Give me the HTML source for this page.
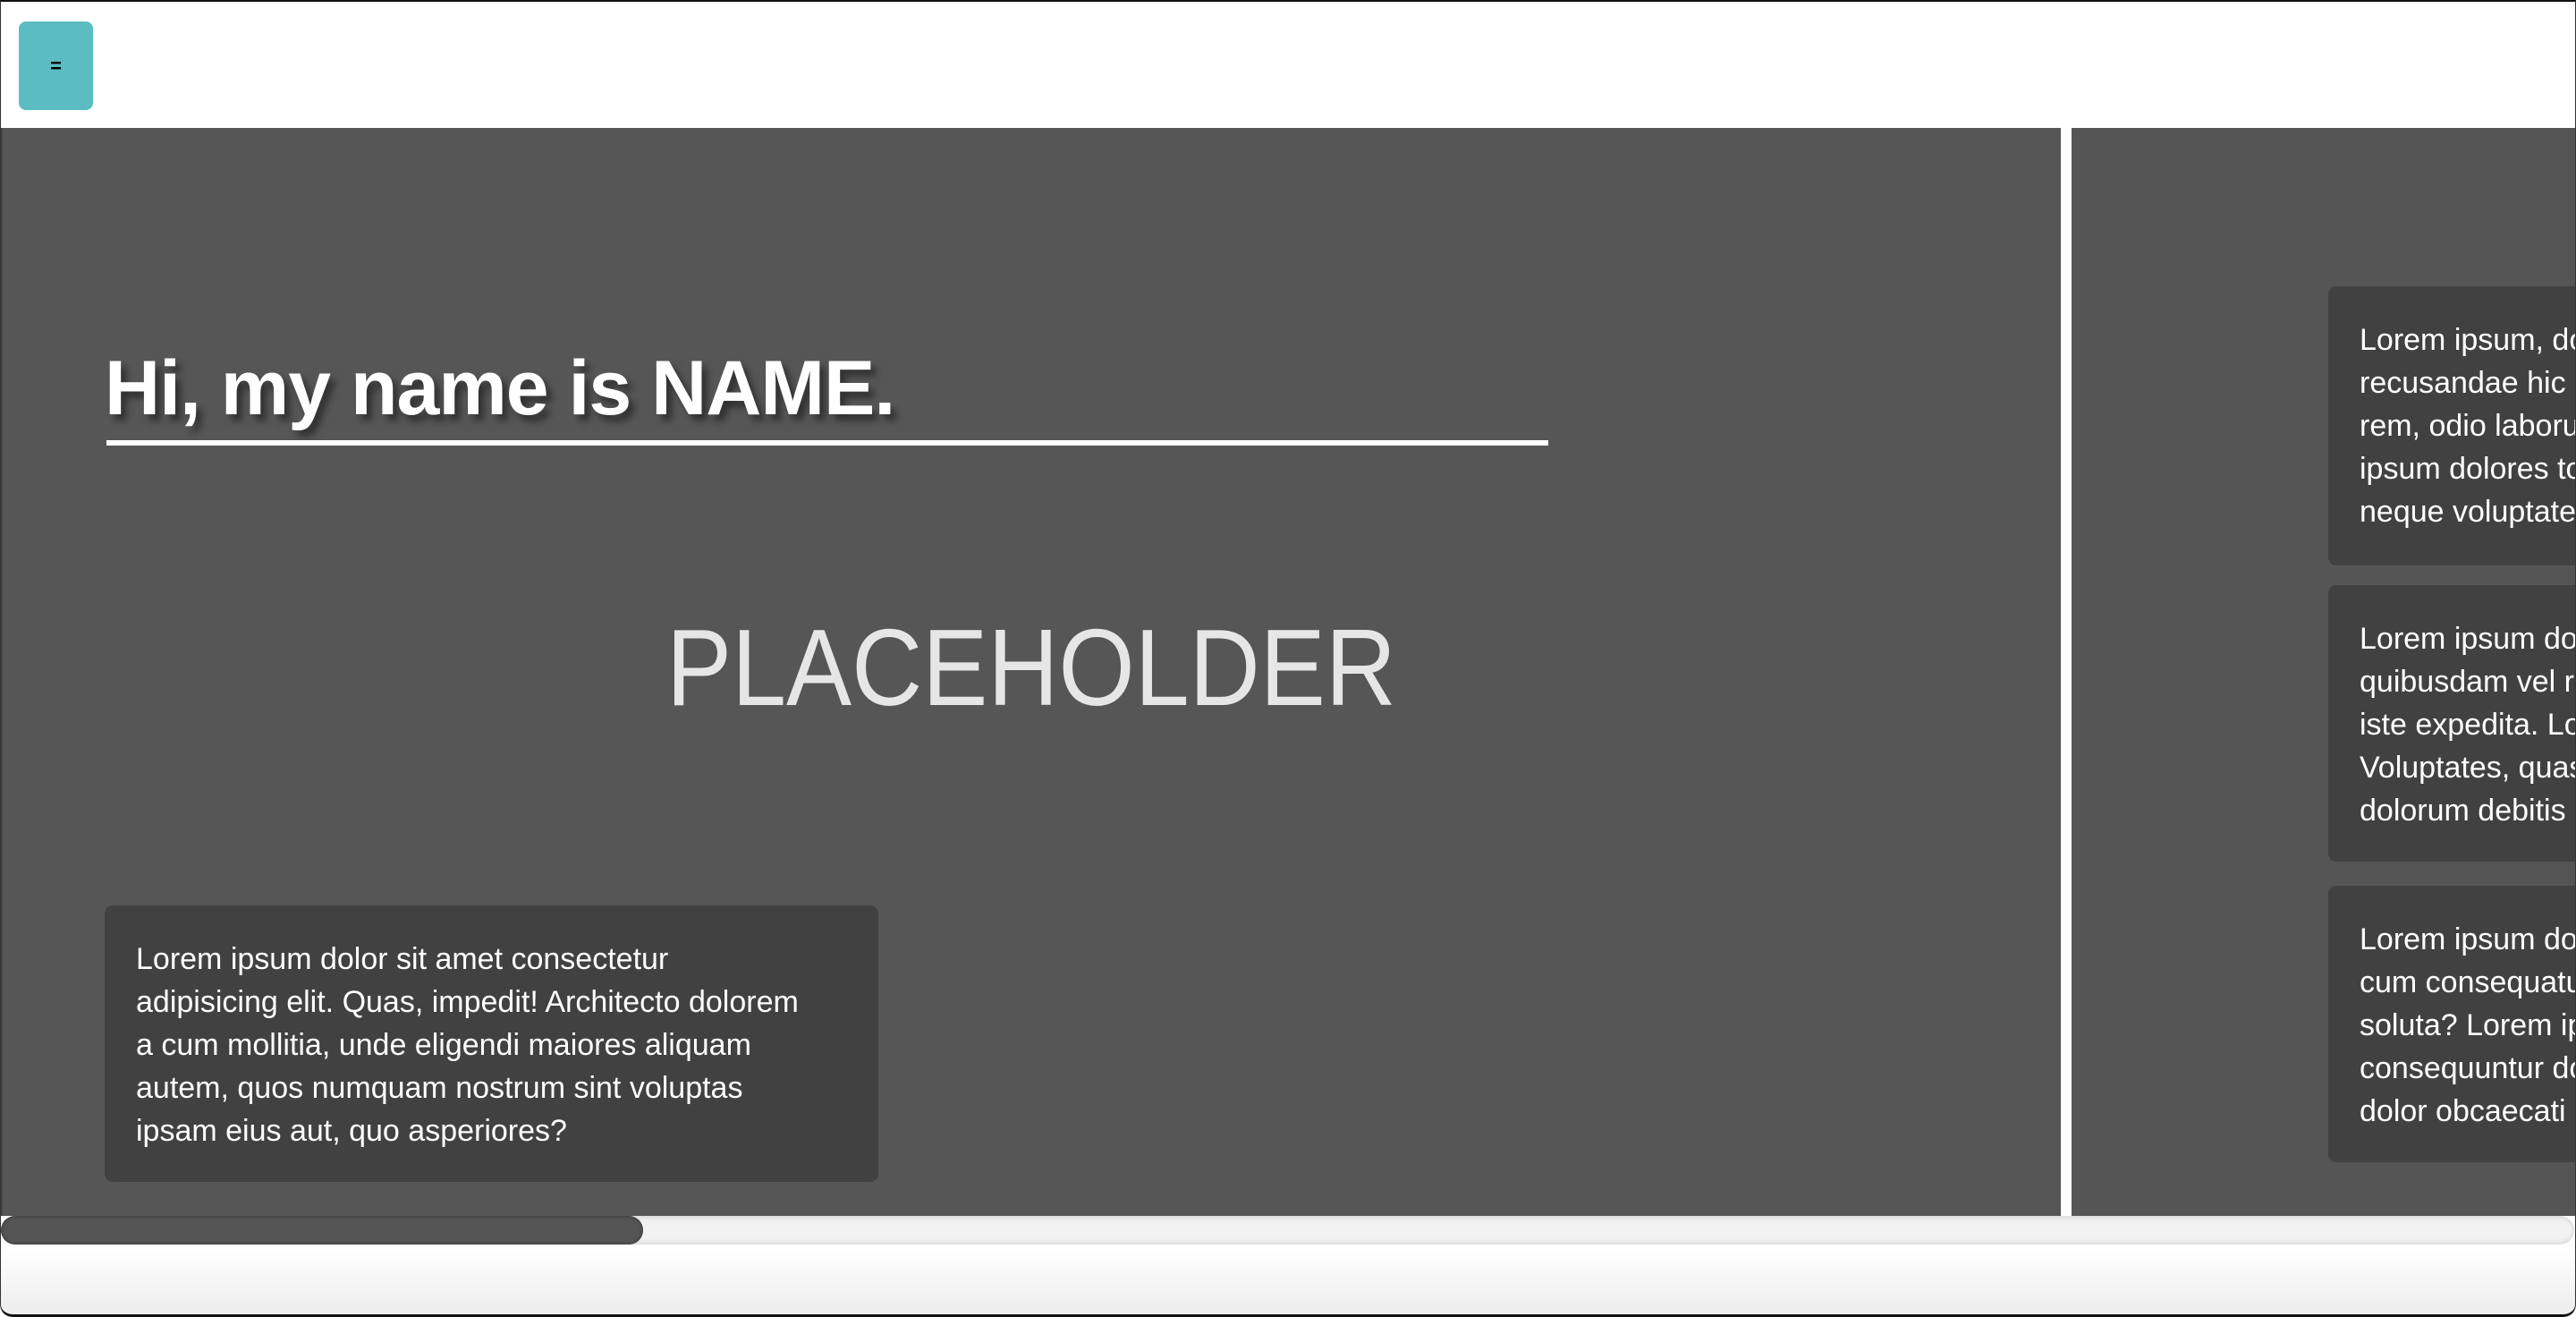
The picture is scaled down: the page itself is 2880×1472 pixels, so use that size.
<!DOCTYPE html>
<html><head><meta charset="utf-8"><style>
*{margin:0;padding:0;box-sizing:border-box}
html,body{width:2880px;height:1472px;overflow:hidden;background:#fff;font-family:"Liberation Sans",sans-serif}
.frame{position:absolute;left:0;top:0;width:2880px;height:1472px;border-top:2px solid #111;border-bottom:3px solid #111;border-left:1px solid #333;border-right:1px solid #333;border-radius:0 0 14px 14px;overflow:hidden;background:linear-gradient(#fff 1389px,#fdfdfd 1400px,#ececec 1470px)}
.btn{position:absolute;left:20px;top:22px;width:83px;height:99px;background:#5bbcc1;border-radius:8px;font-size:22px;font-weight:bold;color:#000;display:flex;align-items:center;justify-content:center}
.hero{position:absolute;left:0;top:141px;width:2303px;height:1216px;background:#565656;border-left:2px solid #444}
.div{position:absolute;left:2303px;top:141px;width:12px;height:1216px;background:#fff}
.right{position:absolute;left:2315px;top:141px;width:2565px;height:1216px;background:#555}
h1{position:absolute;left:114px;top:248px;font-size:86px;line-height:1;font-weight:bold;color:#fff;text-shadow:6px 7px 8px rgba(0,0,0,.45);letter-spacing:-1px;white-space:nowrap}
.ul{position:absolute;left:116px;top:349px;width:1612px;height:6px;background:#fff}
.card{position:absolute;background:#414141;border-radius:9px;color:#fff;font-size:34px;line-height:48px;padding:36px 35px;white-space:nowrap;overflow:hidden}
.sb{position:absolute;left:0;top:1357px;width:2877px;height:32px;border-radius:16px;background:#f2f2f2;box-shadow:inset 0 3px 4px #ddd,inset 0 -3px 4px #ddd}
.th{position:absolute;left:0;top:1357px;width:718px;height:32px;border-radius:16px;background:#555;box-shadow:inset 0 0 4px #333}
</style></head><body><div class="frame">
<div class="btn">=</div>
<div class="hero">
<h1>Hi, my name is NAME.</h1>
<div class="ul"></div>
<svg style="position:absolute;left:0;top:0" width="2300" height="1216"><text x="742" y="645" font-family="Liberation Sans" font-size="122" fill="#e6e6e6" textLength="816" lengthAdjust="spacingAndGlyphs">PLACEHOLDER</text></svg>
<div class="card" style="left:114px;top:869px;width:865px;height:309px">Lorem ipsum dolor sit amet consectetur<br>adipisicing elit. Quas, impedit! Architecto dolorem<br>a cum mollitia, unde eligendi maiores aliquam<br>autem, quos numquam nostrum sint voluptas<br>ipsam eius aut, quo asperiores?</div>
</div>
<div class="div"></div>
<div class="right">
<div class="card" style="left:287px;top:177px;width:600px;height:312px">Lorem ipsum, dolor sit amet<br>recusandae hic quas<br>rem, odio laborum<br>ipsum dolores totam<br>neque voluptatem</div>
<div class="card" style="left:287px;top:511px;width:600px;height:309px">Lorem ipsum dolor sit<br>quibusdam vel ratione<br>iste expedita. Lorem<br>Voluptates, quas<br>dolorum debitis</div>
<div class="card" style="left:287px;top:847px;width:600px;height:309px">Lorem ipsum dolor sit<br>cum consequatur<br>soluta? Lorem ipsum<br>consequuntur dolor<br>dolor obcaecati</div>
</div>
<div class="sb"></div><div class="th"></div>
</div></body></html>
